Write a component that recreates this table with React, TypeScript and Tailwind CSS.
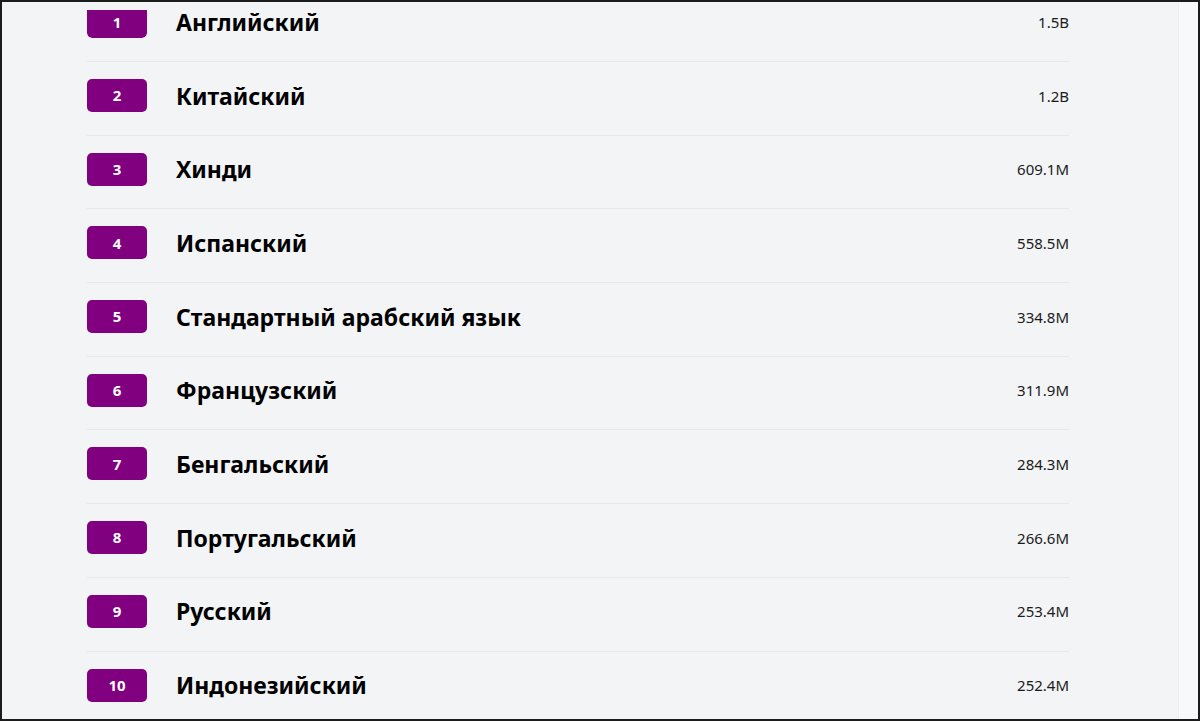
import React from "react";

const rows = [
  { n: 1, name: "Английский", v: "1.5B" },
  { n: 2, name: "Китайский", v: "1.2B" },
  { n: 3, name: "Хинди", v: "609.1M" },
  { n: 4, name: "Испанский", v: "558.5M" },
  { n: 5, name: "Стандартный арабский язык", v: "334.8M" },
  { n: 6, name: "Французский", v: "311.9M" },
  { n: 7, name: "Бенгальский", v: "284.3M" },
  { n: 8, name: "Португальский", v: "266.6M" },
  { n: 9, name: "Русский", v: "253.4M" },
  { n: 10, name: "Индонезийский", v: "252.4M" },
];

export default function App() {
  return (
    <div
      className="w-[1200px] h-[721px] border-2 border-[#1c1c1c] bg-[#f3f4f6] flex overflow-hidden"
      style={{ fontFamily: '"Noto Sans", "Open Sans", sans-serif' }}
    >
      <div className="flex-1 overflow-hidden">
        <div className="mt-[-13.7px] pl-[85px] w-[1067px]">
          {rows.map((r) => (
            <div
              key={r.n}
              className="flex items-center pt-[17px] pb-[22.7px] border-b border-[#e6e8eb] last:border-b-0"
            >
              <div
                className={
                  r.n === 1
                    ? "w-[60px] h-[33px] rounded-b-[5px] border-t-[5px] border-transparent bg-clip-padding pb-[5px] bg-[#800080] text-white text-[15px] font-bold flex items-center justify-center shrink-0"
                    : "w-[60px] h-[33px] rounded-[5px] bg-[#800080] text-white text-[15px] font-bold flex items-center justify-center shrink-0"
                }
              >
                {r.n}
              </div>
              <div className="ml-[29px] text-[23px] font-bold text-black leading-[18px] flex-1">
                {r.name}
              </div>
              <div className="text-[15px] text-[#1a1a1a] leading-[14px]">{r.v}</div>
            </div>
          ))}
        </div>
      </div>
      <div className="w-[20px] shrink-0 bg-[#f8f9fa] border-l border-[#eceef1]" />
    </div>
  );
}
